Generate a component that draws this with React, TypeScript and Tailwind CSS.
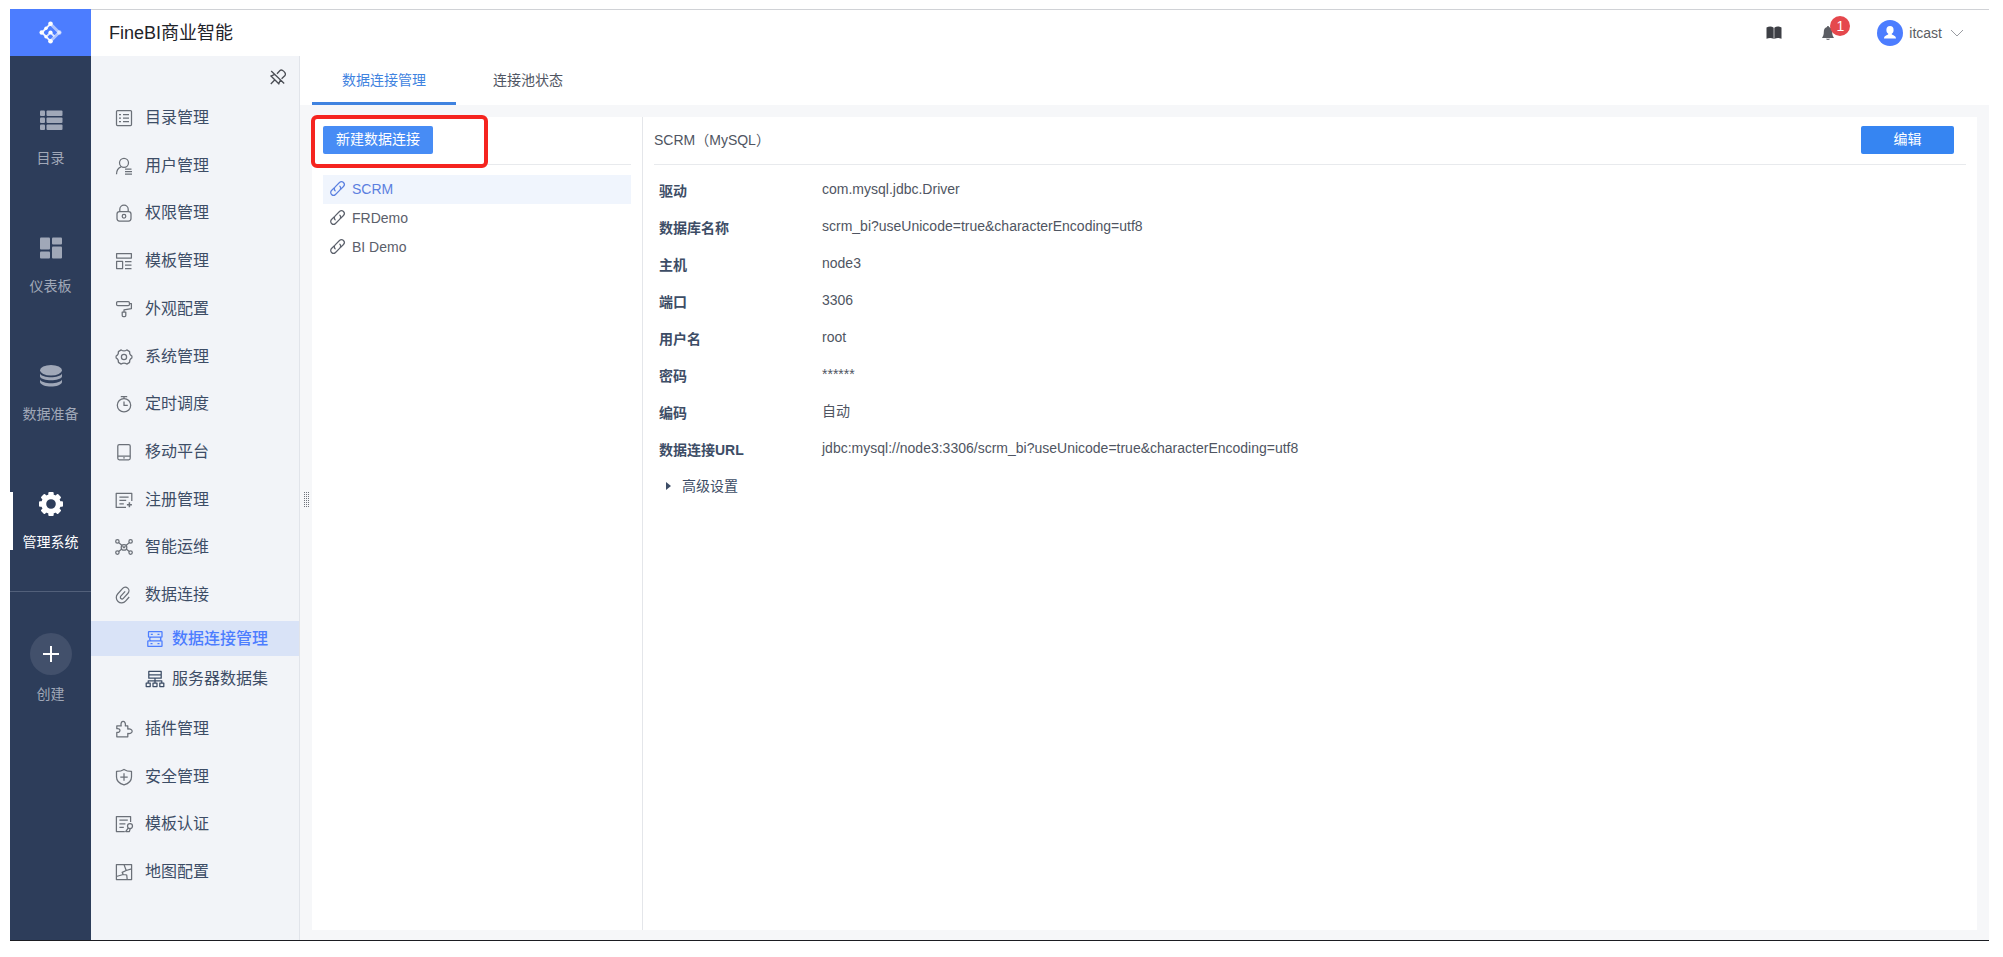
import React, { useState } from 'react';

type IconProps = { className?: string };

const RAIL_ITEMS = [
    { id: 'catalog', label: '目录' },
    { id: 'dashboard', label: '仪表板' },
    { id: 'data', label: '数据准备' },
    { id: 'system', label: '管理系统' },
];

const MENU_TOP = [
    { id: 'catalog', label: '目录管理' },
    { id: 'user', label: '用户管理' },
    { id: 'lock', label: '权限管理' },
    { id: 'template', label: '模板管理' },
    { id: 'roller', label: '外观配置' },
    { id: 'gear', label: '系统管理' },
    { id: 'timer', label: '定时调度' },
    { id: 'mobile', label: '移动平台' },
    { id: 'register', label: '注册管理' },
    { id: 'network', label: '智能运维' },
    { id: 'clip', label: '数据连接' },
];

const MENU_SUB = [
    { id: 'servers', label: '数据连接管理' },
    { id: 'dataset', label: '服务器数据集' },
];

const MENU_BOTTOM = [
    { id: 'plugin', label: '插件管理' },
    { id: 'shield', label: '安全管理' },
    { id: 'certify', label: '模板认证' },
    { id: 'map', label: '地图配置' },
];

const TABS = ['数据连接管理', '连接池状态'];

const CONNECTIONS = ['SCRM', 'FRDemo', 'BI Demo'];

const DETAILS = [
    ['驱动', 'com.mysql.jdbc.Driver'],
    ['数据库名称', 'scrm_bi?useUnicode=true&characterEncoding=utf8'],
    ['主机', 'node3'],
    ['端口', '3306'],
    ['用户名', 'root'],
    ['密码', '******'],
    ['编码', '自动'],
    ['数据连接URL', 'jdbc:mysql://node3:3306/scrm_bi?useUnicode=true&characterEncoding=utf8'],
];

// 16x16 line icons for the side menu
const MENU_ICONS: Record<string, React.ReactNode> = {
    catalog: (
        <>
            <rect x="0.5" y="0.5" width="15" height="15" rx="1" />
            <path d="M3 4.5h2M7 4.5h6M3 8h2M7 8h6M3 11.5h2M7 11.5h6" />
        </>
    ),
    user: (
        <>
            <circle cx="8" cy="4.8" r="4.5" />
            <path d="M.5 16.3c0-3.8 1.7-6.3 4.5-7.4M9 11.2h6.5M9 13.7h7M9 16.2h7" />
        </>
    ),
    lock: (
        <>
            <rect x="1" y="6.5" width="14" height="9.5" rx="2.5" />
            <path d="M3.8 6.5V4.3a4.2 4.2 0 0 1 8.4 0v2.2" />
            <circle cx="8" cy="11.2" r="1.8" />
        </>
    ),
    template: (
        <path d="M.6.6h14.8v4.4H.6zM.6 8.4h6v7.2h-6zM9 8.5h6.5M9 12h6.5M9 15.5h6.5" />
    ),
    roller: (
        <path d="M1.8.6h10.4q1.2 0 1.2 1.2v1.6q0 1.2-1.2 1.2H1.8Q.6 4.6.6 3.4V1.8Q.6.6 1.8.6zM13.4 2.6h2v5L8 8.8v2.2M6.2 11h3.6v3.6q0 1-1 1H7.2q-1 0-1-1z" />
    ),
    gear: (
        <>
            <path d="M5.2.9Q8 2.9 10.8.9L13.6 2.6Q13.2 5.8 15.9 7V9Q13.2 10.2 13.6 13.4L10.8 15.1Q8 13.1 5.2 15.1L2.4 13.4Q2.8 10.2.1 9V7Q2.8 5.8 2.4 2.6Z" />
            <circle cx="8" cy="8" r="2.6" />
        </>
    ),
    timer: (
        <>
            <circle cx="8" cy="9.2" r="6.7" />
            <path d="M4.8.6h6.4M8 .6v1.900M8 5.4v4h3.8" />
        </>
    ),
    mobile: (
        <>
            <rect x="1.8" y="0.5" width="12.4" height="15.3" rx="1.5" />
            <path d="M1.8 12h12.4M7.2 13.9h1.6" />
        </>
    ),
    register: (
        <>
            <path d="M15.8 9V1.4H.2v14h9.8M3.4 5h9.2M3.4 8.4h6.8M3.4 11.8h4.4" />
            <path d="M13.4 10.2v5M10.9 12.7h5" strokeWidth="1.5" />
        </>
    ),
    network: (
        <>
            <circle cx="1.4" cy="2.4" r="1.7" />
            <circle cx="14.6" cy="2.4" r="1.7" />
            <circle cx="1.4" cy="13.6" r="1.7" />
            <circle cx="14.6" cy="13.6" r="1.7" />
            <circle cx="8" cy="8.4" r="2.8" />
            <path d="M2.7 3.6l3.3 2.9M13.3 3.6L10 6.5M2.7 12.5L5.8 10M13.3 12.5L10.2 10M6.5 7.3L8 8.8l1.5-1.5" />
        </>
    ),
    // tilted paperclip
    clip: (
        <path
            d="M11.5 6.4H5a1.7 1.7 0 0 0 0 3.4h7a3.6 3.6 0 0 0 0-7.2H4.5a5.3 5.3 0 0 0 0 10.600H10"
            transform="rotate(-48 8 8)"
        />
    ),
    servers: (
        <>
            <rect x="1.5" y="0.6" width="13.5" height="5.6" rx="0.5" />
            <rect x="0.8" y="9.8" width="14.2" height="5.6" rx="0.5" />
            <path d="M3.8 3.4h2M10.500 3.400h2M3.500 12.600h2M10.500 12.600h2M4 6.200c-1.800 1-1.800 2.600 0 3.600M13 6.200c1 1 1 2.600 0 3.600" />
        </>
    ),
    dataset: (
        <>
            <path d="M1.8.4h12.4v3.400H1.800zM1.800 3.800h12.400v3.400H1.800zM8 7.200V12M1.200 12V9.800h13.600V12" />
            <path d="M-.8 12h4v3.600h-4zM6 12h4v3.600H6zM12.800 12h4v3.600h-4z" />
        </>
    ),
    plugin: (
        <path d="M.8 15.8v-4.400c4.200.6 4.200-4.300 0-3.700V4.900h4.400C3.600-1 10.600-1 9.300 4.900h2.500v3.200c5.800-1.200 5.800 5.400 0 4.300v3.400z" />
    ),
    shield: (
        <path d="M8 .4c2 1.400 4.700 2 7.500 2v5.600c0 4.100-3.200 6.700-7.500 7.900C3.700 14.700.5 12.100.5 8V2.400c2.800 0 5.500-.6 7.500-2zM8 4.300v7.400M4.300 8h7.400" />
    ),
    certify: (
        <>
            <path d="M14.600 6V.6H.4v15h8.400M3.400 4.200h8.400M3.400 7.800h6M3.400 11.400h4.400" />
            <circle cx="14" cy="10" r="2.5" />
            <path d="M12.300 11.800l-2.600 3.800h3.700l.8-3" />
        </>
    ),
    map: (
        <path d="M.4.6h15.200v15H.4zM8 .6l2.200 5.900 5.400-1.700M10.200 6.500L6.200 8.400l1 2.100-6.800 2M7.200 10.500l3.500.3M10.700 10.800l.5 4.800" />
    ),
};

const MenuIcon: React.FC<{ id: string }> = ({ id }) => (
    <svg className="size-4 shrink-0 overflow-visible" viewBox="0 0 16 16" fill="none" stroke="currentColor" strokeWidth="1.25" strokeLinejoin="round">
        {MENU_ICONS[id]}
    </svg>
);

const RAIL_ICONS: Record<string, React.ReactNode> = {
    catalog: (
        <>
            <rect x="1" y="2.5" width="5" height="5.5" rx="1" />
            <rect x="7.5" y="2.5" width="16" height="5.5" rx="1" />
            <rect x="1" y="9.5" width="5" height="5.5" rx="1" />
            <rect x="7.5" y="9.5" width="16" height="5.5" rx="1" />
            <rect x="1" y="16.5" width="5" height="5.5" rx="1" />
            <rect x="7.5" y="16.5" width="16" height="5.5" rx="1" />
        </>
    ),
    dashboard: (
        <>
            <rect x="1" y="1.5" width="10" height="12" rx="1" />
            <rect x="13" y="1.5" width="10" height="7" rx="1" />
            <rect x="1" y="15.5" width="10" height="7" rx="1" />
            <rect x="13" y="10.5" width="10" height="12" rx="1" />
        </>
    ),
    data: (
        <>
            <ellipse cx="12" cy="6.3" rx="11" ry="5.3" />
            <path d="M1 9.500c2.200 5 19.800 5 22 0v3c-1.500 5-20.500 5-22 0zM1 15.500c2.200 5 19.800 5 22 0v2.700c-1.500 5.700-20.500 5.700-22 0z" />
        </>
    ),
    system: (
        <>
            <circle cx="12" cy="12" r="7.3" fill="none" stroke="currentColor" strokeWidth="5" />
            {[0, 45, 90, 135, 180, 225, 270, 315].map(a => (
                <rect key={a} x="9.3" y="0" width="5.4" height="5" rx="1" transform={`rotate(${a} 12 12)`} />
            ))}
        </>
    ),
};

const LogoIcon: React.FC<IconProps> = ({ className }) => (
    <svg className={className} viewBox="0 0 24 24" fill="none" stroke="#fff" strokeWidth="2">
        <path d="M12 3L3 12l9 9" strokeOpacity="0.9" />
        <path d="M12 3l9 9-9 9" strokeOpacity="0.55" strokeWidth="3" />
        <path d="M8.500 15.500L12 12l4 4" strokeOpacity="0.8" />
        <g fill="#fff" stroke="none">
            <circle cx="12" cy="2.8" r="2.4" />
            <circle cx="12" cy="21.2" r="2.4" />
            <circle cx="2.8" cy="12" r="2.3" />
            <circle cx="12" cy="12" r="2.2" />
            <circle cx="7.3" cy="7.5" r="1.8" />
            <circle cx="7.3" cy="16.5" r="1.8" />
            <circle cx="21.2" cy="12" r="2.3" fillOpacity="0.6" />
        </g>
    </svg>
);

const PinIcon: React.FC<IconProps> = ({ className }) => (
    <svg className={className} viewBox="0 0 16 16" fill="none" stroke="currentColor" strokeWidth="1.3">
        <path d="M1.200 2l13 12.500M7 4.800l3-3.300c2-1.800 6.600 2.400 5 5l-3.400 3.200M4.400 5.600L1 7l7.800 7.800 1.500-3.600M4.400 11.300L.8 15" />
    </svg>
);

// two interlocked chain links
const LinkIcon: React.FC<IconProps> = ({ className }) => (
    <svg className={className} viewBox="0 0 16 16" fill="none" stroke="currentColor" strokeWidth="1.3" strokeLinecap="round">
        <g transform="rotate(-45 8 8)">
            <path d="M5.500 5H2a3 3 0 0 0 0 6h6.500a3 3 0 0 0 3-3" />
            <path d="M10.500 11H14a3 3 0 0 0 0-6H7.500a3 3 0 0 0-3 3" />
        </g>
    </svg>
);

const BookIcon: React.FC<IconProps> = ({ className }) => (
    <svg className={className} viewBox="0 0 16 14" fill="currentColor">
        <path d="M.5 1.500C3 .2 5.500.2 7.500 1.500v11.300C5.500 11.600 3 11.600.5 12.800zM8.500 1.500c2-1.300 4.500-1.300 7 0v11.300c-2.500-1.200-5-1.200-7 0z" />
        <path d="M7.300 2h1.400v11H7.300z" fillOpacity="0.5" />
    </svg>
);

const BellIcon: React.FC<IconProps> = ({ className }) => (
    <svg className={className} viewBox="0 0 12 14" fill="currentColor">
        <path d="M6 0c.7 0 1 .5 1 1.100 2.300.6 3.200 2.500 3.200 4.900 0 2.600.5 4 1.800 6H0c1.300-2 1.800-3.400 1.800-6 0-2.400.9-4.300 3.200-4.900C5 .5 5.300 0 6 0zM4 12.800h4c-.3 1.500-3.700 1.500-4 0z" />
    </svg>
);

const TopBar: React.FC = () => (
    <header className="flex h-[47px] shrink-0">
        <a href="#home" aria-label="FineBI" className="flex w-[81px] items-center justify-center bg-[#4c7dff]">
            <LogoIcon className="size-[23px] overflow-visible" />
        </a>
        <div className="flex flex-1 items-center border-t border-[#d0d2d6] pr-[25px] pl-[18px]">
            <h1 className="text-lg text-[#1f2329]">FineBI商业智能</h1>
            <div className="ml-auto flex items-center">
                <button aria-label="帮助文档" className="mr-10 text-[#3d3f45]">
                    <BookIcon className="h-[14px] w-4" />
                </button>
                <button aria-label="消息" className="relative mr-[43px] text-[#5b5d63]">
                    <BellIcon className="h-[14px] w-3" />
                    <span className="absolute -top-[10px] left-2 flex size-5 items-center justify-center rounded-full bg-[#e5484d] text-sm text-white">1</span>
                </button>
                <button className="flex items-center text-sm text-[#5b5d63]">
                    <span className="mr-[6px] flex size-[26px] items-center justify-center rounded-full bg-[#4c7dff]">
                        <svg className="size-4" viewBox="0 0 16 16" fill="#fff">
                            <ellipse cx="8" cy="5" rx="3.6" ry="4" />
                            <path d="M6.300 7h3.400v2c0 1.200 4.300 1 4.300 4.600H2C2 10 6.300 10.200 6.300 9z" />
                        </svg>
                    </span>
                    itcast
                    <svg className="ml-2 h-2 w-[14px]" viewBox="0 0 14 8" fill="none" stroke="#9a9ca2">
                        <path d="M1 1l6 6 6-6" />
                    </svg>
                </button>
            </div>
        </div>
    </header>
);

const Rail: React.FC = () => {
    const [active, setActive] = useState('system');

    return (
        <nav className="flex w-[81px] shrink-0 flex-col bg-[#2d3d5a] pt-4">
            {RAIL_ITEMS.map(item => (
                <button
                    key={item.id}
                    onClick={() => setActive(item.id)}
                    className={`relative flex h-32 flex-col items-center pt-9 text-sm ${active === item.id ? 'text-white' : 'text-[#a0a8b8]'}`}
                >
                    {active === item.id && <span className="absolute top-9 left-0 h-[58px] w-[3px] bg-white" />}
                    <svg className="mb-4 size-6" viewBox="0 0 24 24" fill="currentColor">
                        {RAIL_ICONS[item.id]}
                    </svg>
                    {item.label}
                </button>
            ))}
            <div className="mt-[7px] border-t border-[#52607a]" />
            <button className="mt-[41px] flex flex-col items-center gap-[9px] text-sm text-[#a0a8b8]">
                <span className="flex size-[42px] items-center justify-center rounded-full bg-[#42506b]">
                    <svg className="size-4" viewBox="0 0 16 16" stroke="#fff" strokeWidth="2">
                        <path d="M8 0v16M0 8h16" />
                    </svg>
                </span>
                创建
            </button>
        </nav>
    );
};

const MenuItem: React.FC<{ id: string; label: string }> = ({ id, label }) => (
    <a href={`#${id}`} className="flex flex-1 items-center gap-[13px] pl-[25px] text-base text-[#3d4d66]">
        <span className="text-[#6b7078]"><MenuIcon id={id} /></span>
        {label}
    </a>
);

const SideMenu: React.FC = () => (
    <aside className="flex w-[209px] shrink-0 flex-col border-r border-[#e1e4ea] bg-[#f2f4f8] pb-11">
        <div className="flex h-[38px] shrink-0 items-end justify-end pr-[13px]">
            <button aria-label="取消固定" className="mb-[9px] text-[#4a4d54]"><PinIcon className="size-4" /></button>
        </div>
        <nav className="flex flex-1 flex-col">
            {MENU_TOP.map(item => <MenuItem key={item.id} {...item} />)}
            <div className="flex flex-col gap-[5px] pt-[2px] pb-[9px]">
                {MENU_SUB.map((item, i) => (
                    <a
                        key={item.id}
                        href={`#${item.id}`}
                        className={`flex h-[35px] items-center gap-[9px] pl-14 text-base ${i === 0 ? 'bg-[#d9e3f7] font-medium text-[#4c7dff]' : 'text-[#3d4d66]'}`}
                    >
                        <MenuIcon id={item.id} />
                        {item.label}
                    </a>
                ))}
            </div>
            {MENU_BOTTOM.map(item => <MenuItem key={item.id} {...item} />)}
        </nav>
    </aside>
);

const ConnectionList: React.FC = () => {
    const [selected, setSelected] = useState('SCRM');

    return (
        <section className="w-[331px] shrink-0 border-r border-[#e4e6ea] bg-white px-[11px]">
            <div className="relative flex h-12 items-center border-b border-[#e8eaed] pb-px">
                <button className="h-7 rounded-xs bg-[#478cf5] px-[13px] pb-[2px] text-sm text-white">新建数据连接</button>
                {/* HIGHLIGHT FRAME */}
                <div className="pointer-events-none absolute -top-[2px] -left-3 h-[53px] w-[177px] rounded-md border-4 border-[#f5241f]" />
            </div>
            <ul className="mt-[10px]">
                {CONNECTIONS.map(name => (
                    <li key={name}>
                        <button
                            onClick={() => setSelected(name)}
                            className={`flex h-[29px] w-full items-center gap-[7px] pb-[2px] pl-[7px] text-sm ${selected === name ? 'bg-[#f0f5fd] text-[#5b80e0]' : 'text-[#5b606b]'}`}
                        >
                            <LinkIcon className="size-[15px] overflow-visible" />
                            {name}
                        </button>
                    </li>
                ))}
            </ul>
        </section>
    );
};

const ConnectionDetail: React.FC = () => (
    <section className="flex-1 bg-white px-[11px] text-sm text-[#4f5562]">
        <div className="flex h-12 items-center border-b border-[#e8eaed] pr-3 pb-px">
            <h2>SCRM（MySQL）</h2>
            <button className="ml-auto h-7 w-[93px] rounded-xs bg-[#3685f2] pb-[2px] text-white">编辑</button>
        </div>
        <dl className="mt-[5px] pl-[5px]">
            {DETAILS.map(([label, value]) => (
                <div key={label} className="flex h-[37px] items-center">
                    <dt className="w-[163px] pt-1 font-bold text-[#3d4d66]">{label}</dt>
                    <dd>{value}</dd>
                </div>
            ))}
        </dl>
        <button className="flex h-10 items-center gap-[11px] pl-3 text-[#3d4d66]">
            <svg className="h-2 w-[5px]" viewBox="0 0 5 8" fill="currentColor">
                <path d="M0 0l5 4-5 4z" />
            </svg>
            高级设置
        </button>
    </section>
);

const App: React.FC = () => {
    const [tab, setTab] = useState(0);

    return (
        <div className="flex h-screen flex-col bg-white pt-[9px] pr-[14px] pb-4 pl-[10px] font-['Liberation_Sans','Noto_Sans_CJK_SC',sans-serif]">
            <div className="flex flex-1 flex-col border-b border-[#1b1d22]">
                <TopBar />
                <div className="flex flex-1">
                    <Rail />
                    <SideMenu />
                    <main className="flex flex-1 flex-col bg-[#f6f7f9]">
                        <div className="flex h-[49px] shrink-0 bg-white pl-3">
                            {TABS.map((name, i) => (
                                <button
                                    key={name}
                                    onClick={() => setTab(i)}
                                    className={`w-36 border-b-3 pt-[2px] text-sm ${tab === i ? 'border-[#3f83e0] text-[#3f83e0]' : 'border-transparent text-[#4f5562]'}`}
                                >
                                    {name}
                                </button>
                            ))}
                        </div>
                        <div className="flex flex-1 pt-3 pr-3 pb-[10px]">
                            {/* DRAG HANDLE */}
                            <div className="flex w-3 items-center justify-center pb-12">
                                <svg className="h-[15px] w-[5px]" viewBox="0 0 5 15" fill="#6f737b" shapeRendering="crispEdges">
                                    {[0, 2, 4, 6, 8, 10, 12, 14].map(y => (
                                        <path key={y} d={`M0 ${y}h1v1H0zM2 ${y}h1v1H2zM4 ${y}h1v1H4z`} />
                                    ))}
                                </svg>
                            </div>
                            <ConnectionList />
                            <ConnectionDetail />
                        </div>
                    </main>
                </div>
            </div>
        </div>
    );
};

export default App;
